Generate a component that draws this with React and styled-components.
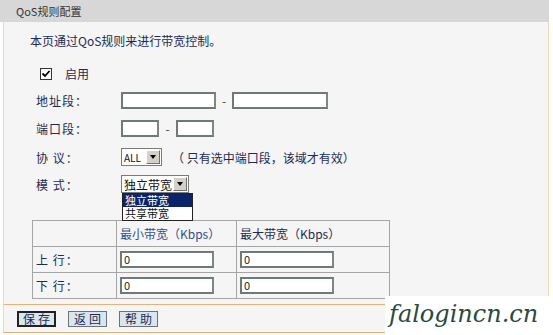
import React from 'react'
import styled, { createGlobalStyle } from 'styled-components'

const Global = createGlobalStyle`
    body {
        margin: 0;
        background: #fff;
        font-family: "Noto Sans CJK SC", "DejaVu Sans", sans-serif;
    }
`

const Page = styled.div`
    position: relative;
    width: 553px;
    height: 335px;
    overflow: hidden;
    background: #fff;
    font-size: 12px;
    color: #1c2b52;
`

const Header = styled.div`
    width: 549px;
    height: 22px;
    line-height: 22px;
    padding-left: 16px;
    box-sizing: border-box;
    background: #d7d7d7;
    color: #333;
    font-size: 11px;
`

const Body = styled.div`
    margin-left: 3px;
    width: 546px;
    height: 283px;
    box-sizing: border-box;
    background: #f5f5f5;
    border-left: 1px solid #eadcb4;
    border-right: 1px solid #eddcb2;
    border-bottom: 1px solid #e6b27c;
    display: flex;
    flex-direction: column;
`

const Intro = styled.div`
    height: 18px;
    line-height: 18px;
    margin-top: 10px;
    padding-left: 26px;
`

const Row = styled.div`
    position: relative;
    display: flex;
    align-items: center;
    height: ${p => p.h}px;
    padding-left: ${p => p.pad || 32}px;
`

const Label = styled.div`
    width: 85px;
    letter-spacing: 1px;
`

const Box = styled.span`
    display: inline-block;
    width: 10px;
    height: 10px;
    border: 1px solid #333;
    background: #fff;
    margin-right: 13px;
    position: relative;
`

const Input = styled.div`
    width: ${p => p.w}px;
    height: 17px;
    box-sizing: border-box;
    border: 2px solid #6f7a78;
    border-right-color: #7d8784;
    background: #fff;
    font-size: 11px;
    line-height: 13px;
    padding-left: 2px;
    color: #222;
`

const Dash = styled.span`
    width: ${p => p.w}px;
    text-align: center;
    color: #444;
`

const Select = styled.div`
    display: flex;
    align-items: center;
    width: ${p => p.w}px;
    height: 18px;
    box-sizing: border-box;
    border: 1px solid #7a7a7a;
    background: #fff;
    padding-left: 2px;
    font-size: ${p => p.fs || 12}px;
    color: #111;
    white-space: nowrap;
`

const SelText = styled.span`
    flex: 1;
`

const Arrow = styled.span`
    width: 14px;
    height: 14px;
    margin-right: 1px;
    box-sizing: border-box;
    background: #d4d0c8;
    border: 1px solid;
    border-color: #fff #6f6f6f #6f6f6f #fff;
    display: flex;
    align-items: center;
    justify-content: center;
    &::after {
        content: '';
        border-left: 3px solid transparent;
        border-right: 3px solid transparent;
        border-top: 4px solid #000;
    }
`

const Note = styled.span`
    margin-left: 10px;
`

const DropList = styled.div`
    position: absolute;
    left: 118px;
    top: 22px;
    width: 69px;
    border: 1px solid #222;
    background: #fff;
    z-index: 2;
`

const Option = styled.div`
    height: 13px;
    display: flex;
    align-items: center;
    padding-left: 2px;
    font-size: 11px;
    line-height: 13px;
    color: ${p => (p.active ? '#fff' : '#111')};
    background: ${p => (p.active ? '#0a246a' : '#fff')};
`

const Table = styled.div`
    margin: 23px 0 0 28px;
    width: 357px;
    display: grid;
    grid-template-columns: 84px 120px 153px;
    border-top: 1px solid #a5a5a5;
    border-left: 1px solid #a5a5a5;
`

const Cell = styled.div`
    height: 26px;
    box-sizing: border-box;
    border-right: 1px solid #a5a5a5;
    border-bottom: 1px solid #a5a5a5;
    display: flex;
    align-items: center;
    padding-left: ${p => p.pad || 3}px;
    color: ${p => p.color || '#1c2b52'};
    letter-spacing: ${p => (p.spaced ? '1px' : '0')};
`

const Footer = styled.div`
    margin-left: 3px;
    width: 546px;
    height: 28px;
    box-sizing: border-box;
    background: #f5f5f5;
    border-left: 1px solid #eadcb4;
    border-bottom: 1px solid #e6b27c;
    display: flex;
    align-items: center;
    gap: 12px;
    padding-left: 13px;
`

const Btn = styled.button`
    width: 39px;
    height: 16px;
    padding: 0;
    box-sizing: border-box;
    background: #d9e6ee;
    border: ${p => (p.focus ? '2px solid #222' : '1px solid #6a7478')};
    font-family: inherit;
    font-size: 12px;
    line-height: 12px;
    letter-spacing: 3px;
    text-indent: 3px;
    white-space: nowrap;
    color: #1c2b52;
    display: flex;
    align-items: center;
    justify-content: center;
`

const Mark = styled.div`
    position: absolute;
    right: 0;
    bottom: 0;
    width: 168px;
    height: 39px;
    background: #fff;
    color: #2b4a40;
    font-family: "DejaVu Serif", serif;
    font-style: italic;
    font-weight: 300;
    font-size: 24px;
    line-height: 36px;
    padding-left: 4px;
    box-sizing: border-box;
    white-space: nowrap;
`

function Check() {
    return (
        <svg width="10" height="10" viewBox="0 0 10 10" style={{ position: 'absolute', left: 0, top: 0 }}>
            <path d="M1.5 4.5 L4 7 L8.5 2" stroke="#000" strokeWidth="1.8" fill="none" />
        </svg>
    )
}

export default function App() {
    return (
        <Page>
            <Global />
            <Header>QoS规则配置</Header>
            <Body>
                <Intro>本页通过QoS规则来进行带宽控制。</Intro>
                <Row h={27} pad={36} style={{ marginTop: 10 }}>
                    <Box><Check /></Box>
                    <span>启用</span>
                </Row>
                <Row h={27}>
                    <Label>地址段：</Label>
                    <Input w={95} />
                    <Dash w={16}>-</Dash>
                    <Input w={96} />
                </Row>
                <Row h={29}>
                    <Label>端口段：</Label>
                    <Input w={38} />
                    <Dash w={17}>-</Dash>
                    <Input w={38} />
                </Row>
                <Row h={28}>
                    <Label>协 议：</Label>
                    <Select w={41} fs={10}>
                        <SelText>ALL</SelText>
                        <Arrow />
                    </Select>
                    <Note>（ 只有选中端口段，该域才有效）</Note>
                </Row>
                <Row h={26}>
                    <Label>模 式：</Label>
                    <Select w={68}>
                        <SelText>独立带宽</SelText>
                        <Arrow />
                    </Select>
                    <DropList>
                        <Option active>独立带宽</Option>
                        <Option>共享带宽</Option>
                    </DropList>
                </Row>
                <Table>
                    <Cell />
                    <Cell color="#2f4f8f">最小带宽（Kbps）</Cell>
                    <Cell>最大带宽（Kbps）</Cell>
                    <Cell spaced>上 行：</Cell>
                    <Cell><Input w={94}>0</Input></Cell>
                    <Cell><Input w={94}>0</Input></Cell>
                    <Cell spaced>下 行：</Cell>
                    <Cell><Input w={94}>0</Input></Cell>
                    <Cell><Input w={94}>0</Input></Cell>
                </Table>
            </Body>
            <Footer>
                <Btn focus>保存</Btn>
                <Btn>返回</Btn>
                <Btn>帮助</Btn>
            </Footer>
            <Mark>falogincn.cn</Mark>
        </Page>
    )
}
